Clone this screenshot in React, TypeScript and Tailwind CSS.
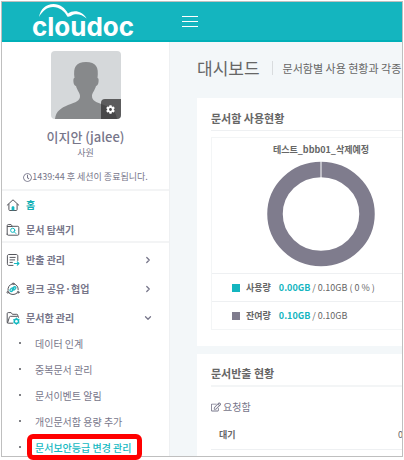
import { useState } from "react";
import type { ReactNode } from "react";
import { FaCog, FaRegClock, FaRegEdit } from "react-icons/fa";
import { ChevronDown, ChevronRight } from "lucide-react";

/* ── Icons ── */

const ICON_CLASS = "h-3.5 w-3.5 flex-shrink-0";

function HomeIcon() {
  return (
    <svg viewBox="0 0 14 14" fill="none" stroke="#55565c" strokeLinecap="round" strokeLinejoin="round" className={ICON_CLASS}>
      <path d="M1.2 7.2 7 1.8l5.8 5.4M2.9 6.2v5.4c0 .6.3.9.9.9h6.4c.6 0 .9-.3.9-.9V6.2" />
      <path d="M5.6 12.2V9.6c0-.8.6-1.3 1.4-1.3s1.4.5 1.4 1.3v2.6z" fill="#14b9c2" stroke="none" />
    </svg>
  );
}

function ExplorerIcon() {
  return (
    <svg viewBox="0 0 14 14" fill="none" stroke="#55565c" strokeLinecap="round" strokeLinejoin="round" className={ICON_CLASS}>
      <path d="M1.2 11.2V2.6c0-.6.4-1 1-1h2.9l1.3 1.7h5.4c.6 0 1 .4 1 1v6.9c0 .6-.4 1-1 1H2.2c-.6 0-1-.4-1-1zM1.4 3.5h4.8" />
      <circle cx="6.7" cy="7.3" r="2.1" stroke="#14b9c2" />
      <path d="m8.3 8.9 1.6 1.6" stroke="#14b9c2" />
    </svg>
  );
}

function ExportIcon() {
  return (
    <svg viewBox="0 0 14 14" fill="none" stroke="#55565c" strokeLinecap="round" strokeLinejoin="round" className={ICON_CLASS}>
      <path d="M7 12.4H3c-1 0-1.6-.6-1.6-1.6V3.1c0-1 .6-1.6 1.6-1.6h7.2c1 0 1.6.6 1.6 1.6v4.4M4 4.4h5.2M4 6.9h4.6M4 9.4h2.4" />
      <path d="M8.4 10.5h4.4M11.3 8.9l1.6 1.6-1.6 1.6" stroke="#14b9c2" strokeWidth="1.2" />
    </svg>
  );
}

function ShareIcon() {
  return (
    <svg viewBox="0 0 14 14" fill="none" stroke="#55565c" strokeLinecap="round" strokeLinejoin="round" className={ICON_CLASS}>
      <path d="M2 8.4C1.6 5.3 3.5 2.6 6 2M8.4 2c2.3.7 4 2.9 3.8 5.8M3.4 11.4c2.2 1.5 5 1.5 7.2 0" />
      <circle cx="7.2" cy="1.8" r=".8" />
      <circle cx="1.9" cy="10.3" r=".9" />
      <circle cx="12.1" cy="10.3" r=".9" />
      <path d="M6.2 6.2 7.8 4.9c1.4-.9 2.8.6 1.8 1.8L8.4 7.9M7.8 7.6 6.2 9.2c-1.4 1-3-.6-1.9-1.9l1.2-1.2M5.9 8.2l2.3-2.3" stroke="#14b9c2" strokeWidth="1.2" />
    </svg>
  );
}

function FolderIcon() {
  return (
    <svg viewBox="0 0 14 14" fill="none" stroke="#55565c" strokeLinecap="round" strokeLinejoin="round" className={ICON_CLASS}>
      <path d="M6.6 12.2H2.2c-.6 0-1-.4-1-1V2.6c0-.6.4-1 1-1h2.9l1.3 1.7h4.4c.6 0 1 .4 1 1v.6M1.6 11.8l1.8-5.6c.2-.6.5-.9 1.1-.9h7.3c.6 0 1 .5.8 1.1" />
      <circle cx="10.4" cy="10.2" r="2.1" stroke="#14b9c2" strokeWidth="1.7" />
      <path d="M10.4 6.9v6.6M7.5 8.5l5.8 3.4M7.5 11.9l5.8-3.4" stroke="#14b9c2" strokeWidth=".8" />
      <circle cx="10.4" cy="10.2" r="1.2" fill="#fff" stroke="none" />
    </svg>
  );
}

/* ── Menu data ── */

interface MenuItem {
  readonly label: string;
  readonly icon: ReactNode;
}

const TOP_ITEMS: MenuItem[] = [
  { label: "홈", icon: <HomeIcon /> },
  { label: "문서 탐색기", icon: <ExplorerIcon /> },
];

const GROUP_ITEMS: MenuItem[] = [
  { label: "반출 관리", icon: <ExportIcon /> },
  { label: "링크 공유·협업", icon: <ShareIcon /> },
  { label: "문서함 관리", icon: <FolderIcon /> },
];

const SUB_ITEMS = ["데이터 인계", "중복문서 관리", "문서이벤트 알림", "개인문서함 용량 추가", "문서보안등급 변경 관리"];

const ACTIVE_SUB_ITEM = "문서보안등급 변경 관리";

/* ── Header ── */

function Logo() {
  return (
    <a href="#" aria-label="cloudoc" className="relative ml-[30px] block h-10 pt-2.5 font-['Inter',sans-serif] text-[26px] leading-8 font-bold text-white">
      cloudoc
      <svg viewBox="0 0 48 16" fill="#fff" className="absolute top-[3px] left-[7px] h-4 w-12">
        <path d="M0 13C1.500 5 7 0 14.500 0c6.500 0 11.500 4 14.500 9.500 6-4 14-2.500 18.700 5-5-4-10.700-5.500-15.500-2.700-1.500.9-2.700 1-3.700 1C25.500 7 20.500 3.200 14 3 8 3 3.500 7 0 13z" />
      </svg>
    </a>
  );
}

/* ── Sidebar ── */

function Profile() {
  return (
    <div className="flex flex-col items-center border-b-2 border-[#f3f4f5] pt-[9px] pb-1.5">
      <div className="relative h-[68px] w-[70px] overflow-hidden rounded bg-[#d5d8da]">
        <svg viewBox="0 0 70 68" fill="#87898b" className="h-full w-full">
          <path d="M4 68c1-8 6-11 13-14 8-3 12-4 12-9 0-3-3-6-4-10-2 0-3-4-2.500-7 .2-.8.7-1 1-1C22 16 25 11 35 11s13 5 11.500 16c.4 0 .8.300 1 1 .5 3-.5 7-2.500 7-1 4-4 7-4 10 0 5 4 6 12 9 7 3 12 6 13 14z" />
        </svg>
        <button type="button" aria-label="설정" className="absolute right-0 bottom-0 flex h-5 w-5 items-center justify-center rounded-tl bg-[#333]/75 text-white">
          <FaCog className="h-[9px] w-[9px]" />
        </button>
      </div>
      <p className="mt-2 text-[13px] leading-5 font-medium">이지안 (jalee)</p>
      <p className="text-[9px] leading-3">사원</p>
      <p className="mt-3 flex items-center text-[9px] leading-3">
        <FaRegClock className="h-[9px] w-[9px]" />
        1439:44 후 세션이 종료됩니다.
      </p>
    </div>
  );
}

function Sidebar() {
  const [openGroup, setOpenGroup] = useState("문서함 관리");

  return (
    <nav className="w-[168px] flex-shrink-0 border-r border-[#eef0f2] bg-white text-[#77768a]">
      <Profile />
      <ul className="border-b-2 border-[#f3f4f5]">
        {TOP_ITEMS.map((item) => (
          <li key={item.label}>
            <a
              href="#"
              className={`flex h-[25px] items-center gap-1.5 pt-0.5 pl-1 text-[10px] font-bold ${item.label === "홈" ? "text-[#14b0b5]" : ""}`}
            >
              {item.icon}
              {item.label}
            </a>
          </li>
        ))}
      </ul>
      <ul className="pt-0.5">
        {GROUP_ITEMS.map((item) => (
          <li key={item.label}>
            <button
              type="button"
              onClick={() => setOpenGroup(openGroup === item.label ? "" : item.label)}
              className="flex h-[29px] w-full items-center gap-1.5 pr-4 pl-1 text-[10px] font-bold"
            >
              {item.icon}
              <span className="flex-1 text-left">{item.label}</span>
              {openGroup === item.label ? <ChevronDown className="h-2.5 w-2.5" strokeWidth={3} /> : <ChevronRight className="h-2.5 w-2.5" strokeWidth={3} />}
            </button>
            {openGroup === "문서함 관리" && item.label === openGroup && (
              <ul className="-mt-0.5 -mb-1">
                {SUB_ITEMS.map((label) => (
                  <li key={label} className="relative flex h-[26px] items-center pl-[17px] text-[10px]">
                    <span className="mr-3.5 h-0.5 w-0.5 rounded-full bg-[#55565c]" />
                    <a href="#" className={label === ACTIVE_SUB_ITEM ? "font-medium text-[#14b9c2]" : ""}>
                      {label}
                    </a>
                    {label === ACTIVE_SUB_ITEM && (
                      <span className="pointer-events-none absolute top-0 left-[25px] h-[26px] w-[115px] rounded-md border-5 border-[#f00]" />
                    )}
                  </li>
                ))}
              </ul>
            )}
          </li>
        ))}
      </ul>
    </nav>
  );
}

/* ── Dashboard ── */

function UsageCard() {
  return (
    <section className="w-[460px] bg-white px-3.5 pt-2.5 pb-4">
      <h2 className="border-b border-[#eef0f2] pb-0.5 text-[11px] leading-5 font-bold">문서함 사용현황</h2>
      <div className="mt-1.5 w-[220px] border border-[#f3f5f6]">
        <h3 className="pt-1 text-center text-[9px] leading-4 font-bold">테스트_bbb01_삭제예정</h3>
        <svg viewBox="0 0 108 106" className="mx-auto mt-[3px] mb-1.5 h-[106px] w-[108px]">
          <ellipse cx="54" cy="53" rx="46" ry="44.500" fill="none" stroke="#7f7c8d" strokeWidth="15.500" />
          <path d="M54 0v17" stroke="#fff" />
        </svg>
        <dl className="text-[9px] leading-[27px]">
          <div className="flex items-center border-t border-[#eef0f2] pl-5">
            <span className="mr-1.5 h-2 w-2 bg-[#14b5bf]" />
            <dt className="mr-2 font-bold">사용량</dt>
            <dd><b className="font-bold text-[#14b5bf]">0.00GB</b> / 0.10GB ( 0 % )</dd>
          </div>
          <div className="flex items-center border-t border-[#eef0f2] pl-5">
            <span className="mr-1.5 h-2 w-2 bg-[#7f7c8d]" />
            <dt className="mr-2 font-bold">잔여량</dt>
            <dd><b className="font-bold text-[#14b5bf]">0.10GB</b> / 0.10GB</dd>
          </div>
        </dl>
      </div>
    </section>
  );
}

function ExportCard() {
  return (
    <section className="mt-2 w-[460px] flex-1 bg-white px-3.5 pt-[9px]">
      <h2 className="border-b-2 border-[#f3f5f6] pb-0.5 text-[11px] leading-5 font-bold">문서반출 현황</h2>
      <h3 className="mt-2.5 flex items-center gap-0.5 text-[10px] leading-5 text-[#77768a]">
        <FaRegEdit className="h-2.5 w-2.5" />
        요청함
      </h3>
      <table className="mt-1 w-[220px] text-[9px]">
        <tbody>
          <tr className="h-7 border-b border-[#eef0f2]">
            <th scope="row" className="pl-2 text-left font-bold">대기</th>
            <td className="pr-7 text-right">0</td>
          </tr>
        </tbody>
      </table>
    </section>
  );
}

export default function App() {
  return (
    <div className="h-screen overflow-hidden bg-white p-px font-['Noto_Sans_CJK_KR',sans-serif] text-[#666]">
      <div className="border border-[#bfbfbf]">
        <header className="flex h-10 items-center border-b-2 border-[#00b0b8] bg-[#14b5bf]">
          <div className="w-[168px]">
            <Logo />
          </div>
          <button type="button" aria-label="메뉴" className="ml-3 flex flex-col gap-1">
            <span className="h-px w-4 bg-white" />
            <span className="h-px w-4 bg-white" />
            <span className="h-px w-4 bg-white" />
          </button>
        </header>
        <div className="flex">
          <Sidebar />
          <main className="flex min-w-0 flex-1 flex-col overflow-hidden bg-[#f3f7f9] pl-[27px]">
            <div className="flex items-center pt-3.5 pb-[18px] whitespace-nowrap">
              <h1 className="text-[17px] leading-6">대시보드</h1>
              <span className="mr-2.5 ml-3 h-3.5 w-px flex-shrink-0 bg-[#d9dcde]" />
              <p className="text-[11px] leading-6">문서함별 사용 현황과 각종</p>
            </div>
            <UsageCard />
            <ExportCard />
          </main>
        </div>
      </div>
    </div>
  );
}
